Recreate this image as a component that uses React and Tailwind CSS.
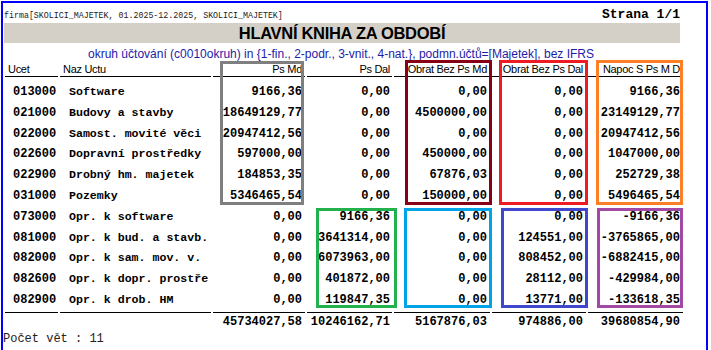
import React from "react";

const rows = [
  ["013000", "Software", "9166,36", "0,00", "0,00", "0,00", "9166,36"],
  ["021000", "Budovy a stavby", "18649129,77", "0,00", "4500000,00", "0,00", "23149129,77"],
  ["022000", "Samost. movité věci", "20947412,56", "0,00", "0,00", "0,00", "20947412,56"],
  ["022600", "Dopravní prostředky", "597000,00", "0,00", "450000,00", "0,00", "1047000,00"],
  ["022900", "Drobný hm. majetek", "184853,35", "0,00", "67876,03", "0,00", "252729,38"],
  ["031000", "Pozemky", "5346465,54", "0,00", "150000,00", "0,00", "5496465,54"],
  ["073000", "Opr. k software", "0,00", "9166,36", "0,00", "0,00", "-9166,36"],
  ["081000", "Opr. k bud. a stavb.", "0,00", "3641314,00", "0,00", "124551,00", "-3765865,00"],
  ["082000", "Opr. k sam. mov. v.", "0,00", "6073963,00", "0,00", "808452,00", "-6882415,00"],
  ["082600", "Opr. k dopr. prostře", "0,00", "401872,00", "0,00", "28112,00", "-429984,00"],
  ["082900", "Opr. k drob. HM", "0,00", "119847,35", "0,00", "13771,00", "-133618,35"],
];

const totals = ["45734027,58", "10246162,71", "5167876,03", "974886,00", "39680854,90"];

const cols = "grid grid-cols-[53px_151px_92px_85px_96px_94px_95px] gap-x-[2px]";
const mono = { fontFamily: '"Liberation Mono", "Courier New", monospace' };
const sans = { fontFamily: '"Liberation Sans", Arial, sans-serif' };

const headers = ["Ps Md", "Ps Dal", "Obrat Bez Ps Md", "Obrat Bez Ps Dal", "Napoc S Ps M D"];
const numPad = ["pr-[3px]", "pr-[2px]", "pr-[3px]", "pr-[3px]", "pr-[3px]"];

function Box({ cls }) {
  return <div className={`absolute border-[3px] pointer-events-none ${cls}`} />;
}

export default function App() {
  return (
    <div className="relative w-[711px] h-[350px] bg-white overflow-hidden text-black">
      <div className="ml-[1px] mt-[1px] w-[707px] h-[360px] border-l-2 border-t-2 border-r-2 border-[#0000ff]">
        <div className="flex items-end justify-between w-[677px] h-[20px] pl-[1px]">
          <span className="text-[8.3px] leading-[10px] mb-[2px] text-[#222]" style={mono}>
            firma[SKOLICI_MAJETEK, 01.2025-12.2025, SKOLICI_MAJETEK]
          </span>
          <span className="text-[13px] leading-[14px] font-bold mb-[1px]" style={mono}>
            Strana 1/1
          </span>
        </div>
        <div className="ml-[1px] w-[676px] h-[20px] bg-[#d4d0c8] flex items-center justify-center">
          <span className="text-[16.5px] font-bold tracking-[-0.3px] leading-[20px]" style={sans}>
            HLAVNÍ KNIHA ZA OBDOBÍ
          </span>
        </div>
        <div className="w-[676px] h-[19px] flex items-center justify-center">
          <span className="text-[12px] leading-[14px] text-[#1c1ca8] mt-[3px]" style={sans}>
            okruh účtování (c0010okruh) in {"{"}1-fin., 2-podr., 3-vnit., 4-nat.{"}"}, podmn.účtů=[Majetek], bez IFRS
          </span>
        </div>
        <div className="ml-[2px]">
          <div className={cols} style={sans}>
            <div className="h-[15px] border-b border-black pl-[3px] text-[11px] leading-[15px] tracking-[-0.3px]">Ucet</div>
            <div className="h-[15px] border-b border-black pl-[3px] text-[11px] leading-[15px] tracking-[-0.3px]">Naz Uctu</div>
            {headers.map((h, i) => (
              <div key={h} className={`h-[15px] border-b border-black text-right text-[11px] leading-[15px] tracking-[-0.3px] ${numPad[i]}`}>
                {h}
              </div>
            ))}
          </div>
          <div className="mt-[4.6px]">
            {rows.map((r) => (
              <div key={r[0]} className={`${cols} h-[20.8px] items-center`}>
                <div className="pl-[8px] text-[12px] font-bold leading-[14px]" style={mono}>{r[0]}</div>
                <div className="pl-[9px] text-[11.6px] font-bold leading-[14px] whitespace-nowrap" style={mono}>{r[1]}</div>
                {r.slice(2).map((v, i) => (
                  <div key={i} className={`text-right text-[12px] font-bold leading-[14px] ${numPad[i]}`} style={mono}>
                    {v}
                  </div>
                ))}
              </div>
            ))}
          </div>
          <div className={`${cols} mt-[1.6px]`}>
            <div className="border-t border-black h-[19px]" />
            <div className="border-t border-black h-[19px]" />
            {totals.map((t, i) => (
              <div key={i} className={`border-t border-black h-[19px] text-right text-[12px] font-bold leading-[19px] ${numPad[i]}`} style={mono}>
                {t}
              </div>
            ))}
          </div>
        </div>
        <div className="h-[16px] text-[12px] leading-[16px] text-[#222]" style={mono}>
          Počet vět : 11
        </div>
      </div>

      <Box cls="left-[220px] top-[61px] w-[84px] h-[144px] border-[#7f7f7f]" />
      <Box cls="left-[405px] top-[60px] w-[87px] h-[145px] border-[#880015]" />
      <Box cls="left-[499px] top-[60px] w-[89px] h-[145px] border-[#ed1c24]" />
      <Box cls="left-[596px] top-[60px] w-[87px] h-[145px] border-[#ff7f27]" />
      <Box cls="left-[316px] top-[208px] w-[81px] h-[100px] border-[#22b14c]" />
      <Box cls="left-[404px] top-[208px] w-[88px] h-[100px] border-[#00a2e8]" />
      <Box cls="left-[501px] top-[208px] w-[87px] h-[100px] border-[#3f48cc]" />
      <Box cls="left-[597px] top-[208px] w-[86px] h-[100px] border-[#a349a4]" />
    </div>
  );
}
